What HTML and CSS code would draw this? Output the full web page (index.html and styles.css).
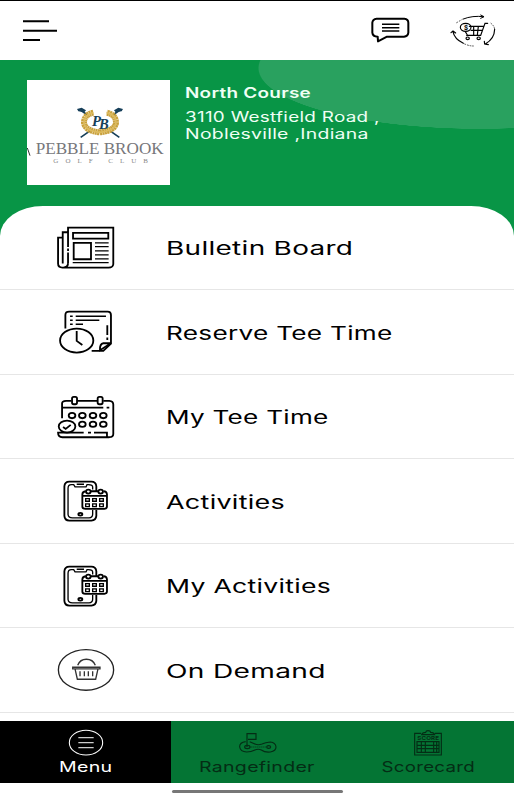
FILE: index.html
```html
<!DOCTYPE html>
<html lang="en">

<head>
    <meta charset="UTF-8">
    <meta name="viewport" content="width=device-width, initial-scale=1.0">
    <title>Pebble Brook Golf Club</title>
    <link rel="stylesheet" href="styles.css">
</head>

<body>
    <header class="topbar">
        <svg class="burger" viewBox="0 0 105 66" fill="none" stroke="#000" stroke-width="6">
            <path d="M0 4h78M0 32h102M0 60h51" />
        </svg>
        <svg class="top-icons" viewBox="0 0 492 180" fill="none" stroke="#000">
            <!-- chat -->
            <path stroke-width="6" stroke-linejoin="round" d="M80 56H163Q175 57 175 68V98Q174 109 162 110H111L84 124L83 110Q68 110 67 98V68Q68 57 80 56Z" />
            <path stroke-width="4.5" d="M96 73H148M96 83H148M96 93H148" />
            <!-- cart -->
            <g stroke-width="3.5" stroke-linecap="round">
                <path stroke-width="3" d="M340 57Q367 46 401 50M392 45L402 50L392 55" />
                <path stroke-dasharray="3 6" stroke-width="2" d="M320 68L337 58" />
                <path d="M309 95Q313 117 340 130M303 98L309 93L317 99" />
                <path stroke-dasharray="3 5" stroke-width="2" d="M344 132Q358 138 370 138" />
                <path d="M434 88Q433 117 407 131M403 124L404 132L415 134" />
                <path stroke-dasharray="3 5" stroke-width="2" d="M423 70Q433 78 434 88" />
                <path d="M413 70H405L392 106H350M358 79H401M363 91H397M346 95L352 105M371 79V105M385 79L382 105" />
                <ellipse cx="347" cy="82" rx="16" ry="12" />
                <ellipse cx="353" cy="115" rx="5" ry="4" />
                <ellipse cx="386" cy="115" rx="5" ry="4" />
            </g>
            <text class="dollar" x="342" y="89">$</text>
        </svg>
    </header>

    <section class="course">
        <svg class="logo" viewBox="81 60 429 315">
            <path stroke="#163f5a" stroke-width="5" d="M242 232L360 150M358 232L241 150" />
            <path fill="#163f5a" d="M231 147L245 143L258 151L253 157L235 154ZM369 147L355 143L342 151L347 157L365 154Z" />
            <ellipse cx="300" cy="188" rx="46" ry="34" fill="#fff" />
            <path fill="none" stroke="#c9a13d" stroke-width="18" stroke-dasharray="6 1" d="M280 158Q252 164 252 188Q254 212 299 217Q346 212 348 188Q348 164 320 158" />
            <path fill="none" stroke="#dcba5c" stroke-width="5" d="M280 158Q252 164 252 188Q254 212 299 217Q346 212 348 188Q348 164 320 158" />
            <text class="mono" x="276" y="199" dx="0 -6" dy="0 8">PB</text>
            <path stroke="#333" stroke-width="3" d="M82 264L90 287" />
            <text class="club" x="107" y="283" textLength="384" lengthAdjust="spacingAndGlyphs">PEBBLE BROOK</text>
            <text class="sub" x="160" y="308" textLength="284">GOLF CLUB</text>
        </svg>
        <div class="address">
            <h1>North Course</h1>
            <p class="street">3110 Westfield Road ,</p>
            <p class="city">Noblesville ,Indiana</p>
        </div>
    </section>

    <main class="menu">
        <div class="item">
            <svg class="icon" viewBox="0 -13 300 254">
                <path d="M84 160V52H220V162Q219 172 206 172H67Q54 172 54 160V82H68V160M68 160V66H84M84 160Q83 171 70 172" />
                <path d="M99 68H205V85H99ZM101 98H153V147H101Z" />
                <path class="thin" d="M165 98H206M165 109H206M165 122H206M165 134H206M165 146H206M98 157H206" />
                <path stroke="#fff" stroke-width="9" d="M84 110v5M84 122v5" />
            </svg>
            <span class="label bulletin">Bulletin Board</span>
        </div>
        <div class="item">
            <svg class="icon" viewBox="0 -15 300 254">
                <path d="M76 101V60Q76 50 87 50H203Q213 50 213 60V146L190 168H155" />
                <path d="M213 145H190Q179 146 180 166L213 145" />
                <path class="thin" d="M90 64H98M107 64H198M90 76H98M107 76H178M90 88H98M107 88H129" />
                <path d="M202 91V120M202 128V135" />
                <ellipse cx="110" cy="137" rx="50" ry="36" />
                <path d="M110 108V138L127 150" />
            </svg>
            <span class="label reserve">Reserve Tee Time</span>
        </div>
        <div class="item">
            <svg class="icon" viewBox="0 -16 300 254">
                <path d="M66 114V70Q66 62 78 62H94M112 62H172M190 62H208Q220 63 220 73V161Q220 170 208 171H67Q54 171 54 157H131M162 157H201V169M66 82H190M200 82h8M144 157h9" />
                <rect x="96" y="50" width="15" height="22" rx="5" />
                <rect x="173" y="50" width="15" height="22" rx="5" />
                <ellipse cx="96" cy="106" rx="10" ry="8" />
                <ellipse cx="127" cy="106" rx="10" ry="8" />
                <ellipse cx="159" cy="106" rx="10" ry="8" />
                <ellipse cx="190" cy="106" rx="10" ry="8" />
                <ellipse cx="127" cy="132" rx="10" ry="8" />
                <ellipse cx="159" cy="132" rx="10" ry="8" />
                <ellipse cx="190" cy="132" rx="10" ry="8" />
                <ellipse cx="81" cy="139" rx="25" ry="18" />
                <path d="M69 140L77 146L92 134" />
            </svg>
            <span class="label my-tee">My Tee Time</span>
        </div>
        <div class="item">
            <svg class="icon" viewBox="0 -18 300 254">
                <g id="phone">
                    <path d="M169 78V64Q168 50 154 50H88Q74 50 73 64V153Q74 167 88 167H154Q168 166 169 153V135" />
                    <path class="thin" d="M158 74V66Q158 59 145 59H141L138 66H105L101 59H94Q84 59 84 70V149Q85 159 97 159H147Q158 158 158 148V135M110 58H132" />
                    <ellipse cx="121" cy="148" rx="6" ry="4" />
                    <path d="M137 79Q127 80 127 89V125Q127 132 136 132H193Q201 131 201 125V88Q200 79 191 79M152 79H174M129 93H200" />
                    <ellipse cx="145" cy="80" rx="7" ry="6" />
                    <ellipse cx="182" cy="80" rx="7" ry="6" />
                    <path class="thin" d="M137 101H148V109H137ZM158 101H169V109H158ZM179 101H190V109H179ZM137 117H148V125H137ZM158 117H169V125H158ZM179 117H190V125H179Z" />
                </g>
            </svg>
            <span class="label activities">Activities</span>
        </div>
        <div class="item">
            <svg class="icon" viewBox="0 -18 300 254">
                <use href="#phone" />
            </svg>
            <span class="label my-act">My Activities</span>
        </div>
        <div class="item">
            <svg class="icon" viewBox="0 -20 300 254">
                <ellipse class="ring" cx="138" cy="106" rx="83" ry="61" />
                <path class="grey" d="M98 98H180V103H174L167 134H112L105 103H98ZM105 103H174" />
                <path class="grey" d="M113 92Q120 74 139 74Q159 74 166 92" />
                <path class="grey" d="M120 110V125M133 110V125M145 110V125M158 110V125" />
            </svg>
            <span class="label demand">On Demand</span>
        </div>
    </main>

    <nav class="tabs">
        <a class="tab active">
            <svg viewBox="0 0 120 81" fill="none" stroke="#fff" stroke-width="3.2">
                <ellipse cx="60" cy="41" rx="50" ry="37" />
                <path stroke="#ccc" stroke-width="4" d="M37 26H83M37 41H83M37 56H83" />
            </svg>
            <span>Menu</span>
        </a>
        <a class="tab range">
            <svg viewBox="0 0 120 81" fill="none" stroke="#042d15" stroke-width="3.4">
                <path d="M30 54V14H57V31H33M26 38Q7 41 8 54Q10 68 29 69Q43 69 52 64Q63 58 73 63Q84 71 100 69Q117 66 117 54Q116 41 100 39Q85 40 75 45Q63 50 52 44L38 38" />
                <ellipse cx="31" cy="54" rx="8" ry="5" />
                <ellipse cx="95" cy="54" rx="6" ry="4" />
                <path stroke-dasharray="3 3" d="M41 54H86" />
            </svg>
            <span>Rangefinder</span>
        </a>
        <a class="tab score">
            <svg viewBox="0 0 120 81" fill="none" stroke="#042d15" stroke-width="3.4">
                <path d="M39 13H20V78H100V13H81M41 17Q43 10 53 10Q54 5 60 5Q67 5 68 10Q78 10 80 17Z" />
                <path d="M27 38H93V70H27ZM27 49H93M27 59H93M40 38V70M52 38V70M77 38V70M86 38V70" />
                <text class="tiny" x="28" y="33" textLength="65" lengthAdjust="spacingAndGlyphs">SCORE</text>
            </svg>
            <span>Scorecard</span>
        </a>
    </nav>
    <div class="home-bar"></div>
</body>

</html>
```
FILE: styles.css
```css
* {
    box-sizing: border-box;
}

body {
    margin: 0;
    height: 800px;
    overflow: hidden;
    background-color: #fff;
    color: #000;
    font-family: Inter, "Liberation Sans", sans-serif;
}

svg {
    display: block;
}

.topbar {
    height: 60px;
    border-top: 1px solid #000;
    display: flex;
    justify-content: space-between;
}

.burger {
    width: 35px;
    height: 22px;
    margin: 19px 0 0 23px;
}

.top-icons {
    width: 164px;
    height: 60px;
    margin-top: -1px;
}

.dollar {
    font-size: 19px;
    font-weight: bold;
    fill: #000;
    stroke: none;
}

.course {
    height: 205px;
    padding: 20px 0 0 27px;
    display: flex;
    gap: 15px;
    align-items: flex-start;
    background: radial-gradient(222px 61px at 480px 8px, #29a15f 99.5%, #089546 100%);
}

.logo {
    width: 143px;
    height: 105px;
    background-color: #fff;
}

.mono {
    font: italic bold 44px "Liberation Serif", serif;
    fill: #163f5a;
}

.club {
    font: 48px "Liberation Serif", serif;
    fill: #77777b;
}

.sub {
    font: 21px "Liberation Serif", serif;
    fill: #888;
}

.address {
    color: #f0fff5;
    white-space: nowrap;
}

.address h1,
.address p {
    margin: 0;
    width: max-content;
    font-size: 14px;
    line-height: 16.5px;
    letter-spacing: 0.2px;
    transform: scaleX(1.35);
    transform-origin: left;
}

.address h1 {
    margin: 5px 0 7.5px;
    font-weight: 600;
}

.address .city {
    transform: scaleX(1.385);
}

/* white sheet that slides over the green block */
.menu {
    margin-top: -59.5px;
    height: 515px;
    overflow: hidden;
    background-color: #fff;
    border-radius: 43px 43px 0 0 / 30px 30px 0 0;
}

.item {
    height: 84.5px;
    display: grid;
    grid-template-columns: 126px 1fr;
    align-items: center;
    padding-left: 40px;
    border-bottom: 1px solid #e6e6e6;
}

.icon {
    width: 100px;
    height: 84.5px;
    fill: none;
    stroke: #000;
    stroke-width: 5.5;
}

.thin {
    stroke-width: 4;
}

.grey {
    stroke: #333;
    stroke-width: 4;
}

.ring {
    stroke: #222;
    stroke-width: 4;
}

.label {
    justify-self: start;
    padding-top: 1px;
    font-size: 18.5px;
    letter-spacing: 0.2px;
    white-space: nowrap;
    transform-origin: left;
}

/* wide lettering */
.bulletin {
    transform: scaleX(1.51);
}

.reserve {
    transform: scaleX(1.415);
}

.my-tee {
    transform: scaleX(1.41);
}

.activities {
    transform: scaleX(1.455);
}

.my-act {
    transform: scaleX(1.437);
}

.demand {
    transform: scaleX(1.52);
}

.tabs {
    height: 62.5px;
    display: grid;
    grid-template-columns: repeat(3, 1fr);
    background-color: #047534;
}

.tab {
    display: flex;
    flex-direction: column;
    align-items: center;
    padding-top: 8px;
    color: #042d15;
    font-size: 14.5px;
    letter-spacing: 0.2px;
}

.tab svg {
    width: 40px;
    height: 27px;
}

.tab span {
    margin-top: 2.5px;
    line-height: 18px;
    transform: scaleX(1.35);
}

.score span {
    transform: scaleX(1.29);
}

.active {
    background-color: #000;
    color: #fff;
}

.tiny {
    font-size: 16px;
    font-weight: bold;
    fill: #042d15;
    stroke: none;
}

.home-bar {
    width: 171px;
    height: 3px;
    margin: 6.5px auto 0;
    border-radius: 2px;
    background-color: #777;
}
```
